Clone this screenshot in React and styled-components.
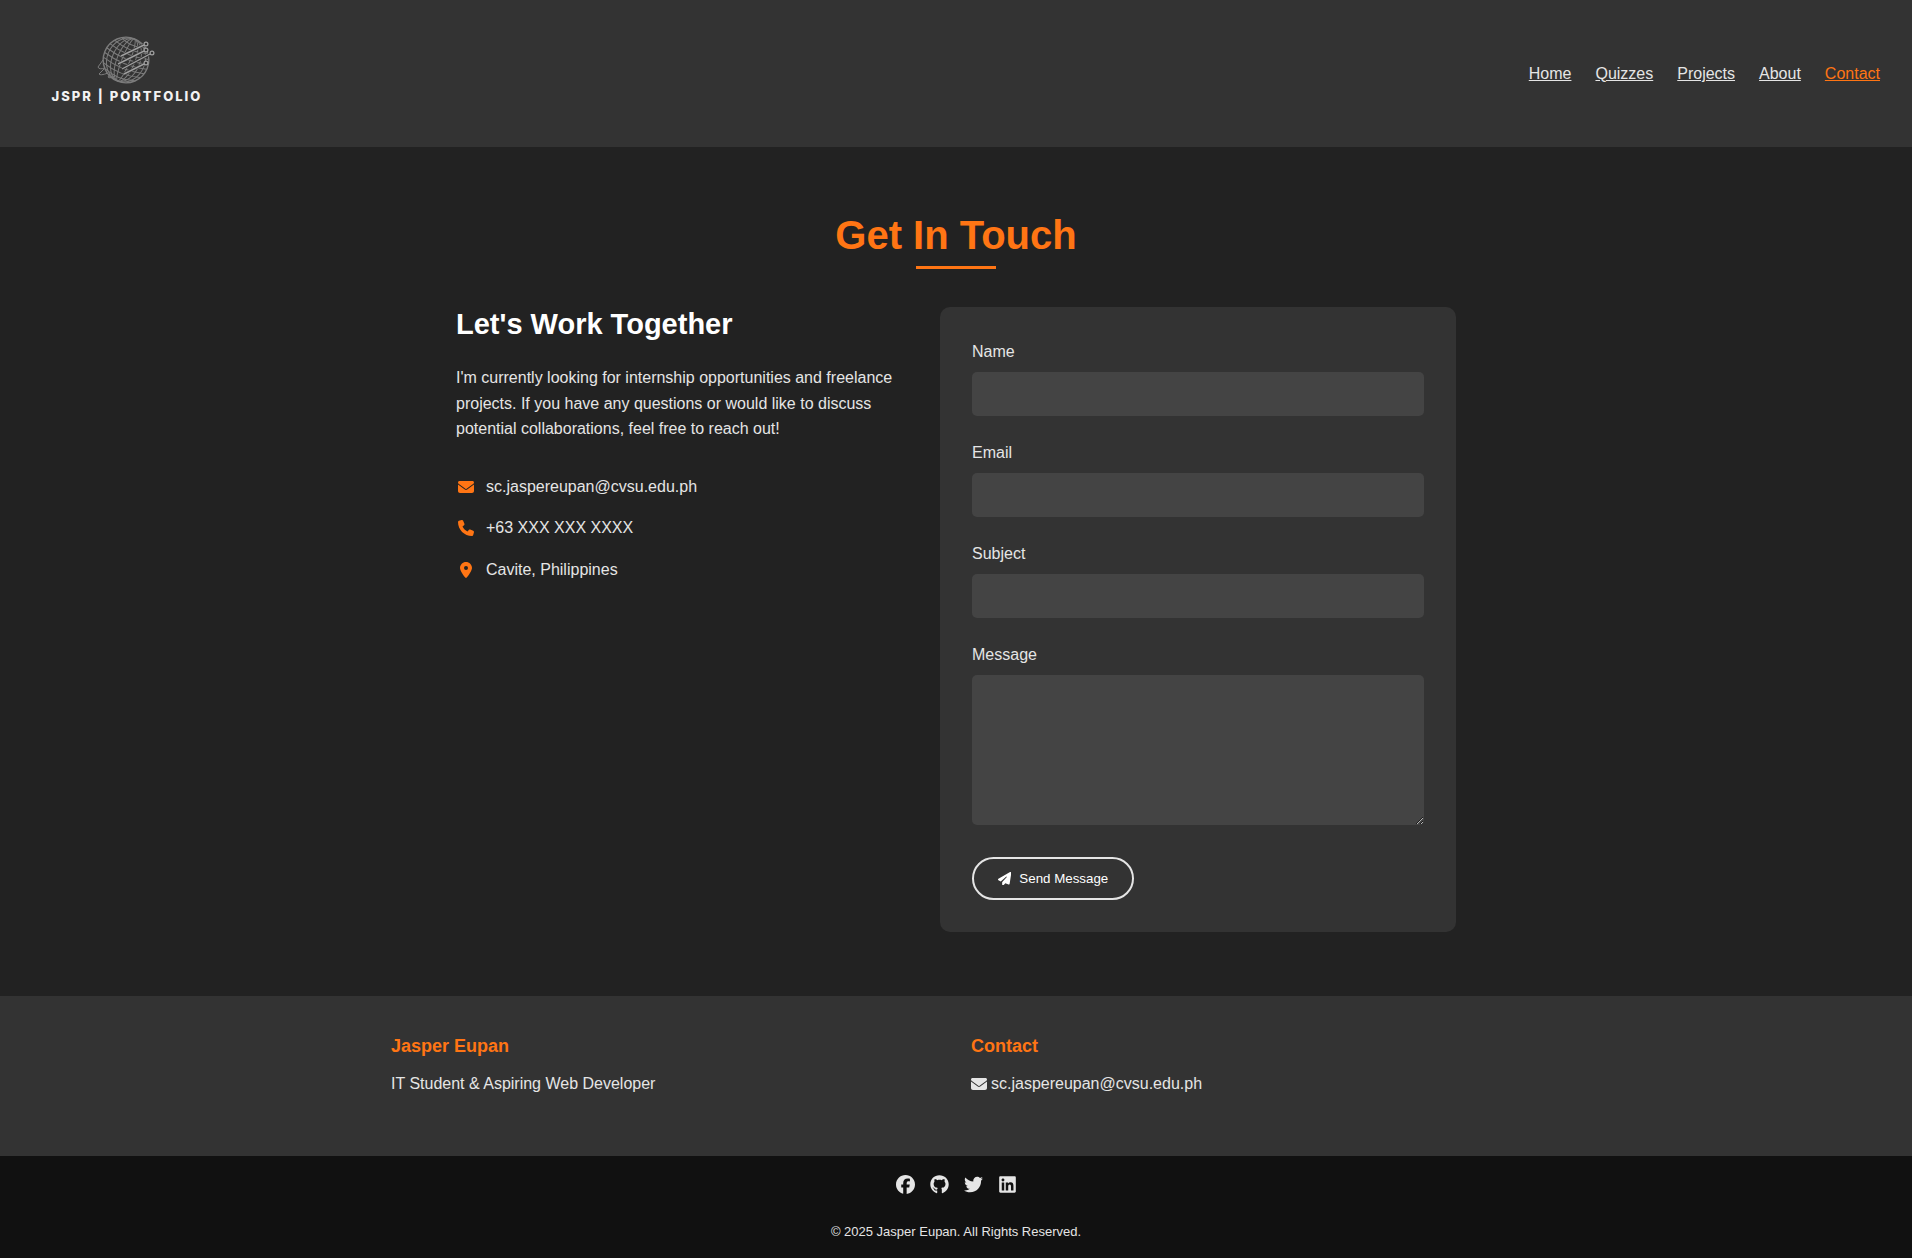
import React from "react";
import styled, { createGlobalStyle } from "styled-components";
import {
  FaEnvelope,
  FaPhone,
  FaLocationDot,
  FaPaperPlane,
  FaFacebook,
  FaGithub,
  FaTwitter,
  FaLinkedin,
} from "react-icons/fa6";

const accent = "#ff7514";
const light = "#e5e5e5";

const GlobalStyle = createGlobalStyle`
  *, *::before, *::after { box-sizing: border-box; }
  body {
    margin: 0;
    background: #222;
    color: ${light};
    font-family: "Liberation Sans", Arial, sans-serif;
    font-size: 16px;
    line-height: 1.6;
  }
  h1, h2, h3, p, ul { margin: 0; padding: 0; }
  ul { list-style: none; }
`;

const Header = styled.header`
  display: flex;
  justify-content: space-between;
  align-items: center;
  padding: 16px 32px;
  background: #333;
`;

const Logo = styled.a`
  display: flex;
  flex-direction: column;
  align-items: center;
  gap: 4px;
  width: 190px;
  padding: 19px 0 27px;
  color: #f2f2f2;
  text-decoration: none;
`;

const LogoText = styled.span`
  font-family: Inter, sans-serif;
  font-size: 13px;
  font-weight: 800;
  line-height: 15px;
  letter-spacing: 2px;
  white-space: nowrap;
`;

const NavList = styled.ul`
  display: flex;
  gap: 24px;
`;

const NavLink = styled.a`
  color: ${(p) => (p.$active ? accent : light)};
  text-decoration: underline;
`;

const ContactSection = styled.main`
  padding: 64px 32px;
`;

const Title = styled.h1`
  margin-bottom: 38px;
  color: ${accent};
  font-size: 40px;
  line-height: 48px;
  text-align: center;

  &::after {
    content: "";
    display: block;
    width: 80px;
    height: 3px;
    margin: 7px auto 0;
    background: ${accent};
  }
`;

const Columns = styled.div`
  display: flex;
  gap: 32px;
  max-width: 1000px;
  margin: 0 auto;
`;

const Info = styled.section`
  flex: 1;
`;

const InfoTitle = styled.h2`
  margin-bottom: 24px;
  color: #fff;
  font-size: 29px;
  line-height: 34px;
`;

const ContactList = styled.ul`
  display: grid;
  gap: 16px;
  margin-top: 32px;
`;

const ContactItem = styled.li`
  display: flex;
  align-items: center;
  gap: 10px;
`;

const IconSlot = styled.span`
  display: flex;
  justify-content: center;
  width: 20px;
  color: ${accent};
`;

const Form = styled.form`
  flex: 1;
  padding: 32px;
  background: #333;
  border-radius: 10px;
`;

const Field = styled.div`
  display: flex;
  flex-direction: column;
  gap: 8px;
  margin-bottom: ${(p) => (p.$last ? 32 : 24)}px;
`;

const Label = styled.label`
  line-height: 25px;
`;

const Input = styled.input`
  width: 100%;
  height: 44px;
  padding: 12px;
  border: 0;
  border-radius: 5px;
  background: #444;
  color: ${light};
  font: inherit;
`;

const TextArea = styled.textarea`
  width: 100%;
  height: 150px;
  padding: 12px;
  border: 0;
  border-radius: 5px;
  background: #444;
  color: ${light};
  font: inherit;
  resize: vertical;
`;

const SendButton = styled.button`
  display: flex;
  align-items: center;
  gap: 8px;
  padding: 12px 24px;
  border: 2px solid ${light};
  border-radius: 30px;
  background: transparent;
  color: #fff;
  font-family: inherit;
  font-weight: 500;
  line-height: 15px;
  cursor: pointer;
`;

const FooterTop = styled.div`
  padding: 39px 32px 59px;
  background: #333;
`;

const FooterColumns = styled.div`
  display: grid;
  grid-template-columns: 1fr 1fr;
  gap: 30px;
  max-width: 1130px;
  margin: 0 auto;
`;

const FooterTitle = styled.h3`
  margin-bottom: 14px;
  color: ${accent};
  font-size: 18px;
  line-height: 22px;
`;

const FooterText = styled.p`
  display: flex;
  align-items: center;
  gap: 4px;
`;

const FooterBottom = styled.div`
  display: flex;
  flex-direction: column;
  align-items: center;
  gap: 27px;
  padding: 19px 32px 15px;
  background: #111;
`;

const Socials = styled.ul`
  display: flex;
  gap: 15px;
`;

const SocialLink = styled.a`
  display: flex;
  color: ${light};
  font-size: 19px;

  svg {
    width: auto;
  }
`;

const Copyright = styled.p`
  font-size: 13px;
  line-height: 22px;
`;

const meridians = [4, 9, 14, 19];
const parallels = [-19, -14, -9, -4, 1, 6, 11, 16];
const rays = [
  [25, 21, 50, 9],
  [22, 29, 50, 15],
  [26, 34, 56, 18],
  [28, 39, 50, 28],
];

function Globe() {
  return (
    <svg width="62" height="50" viewBox="0 0 62 50" fill="none" stroke="#7c7c7c" aria-hidden="true">
      <g transform="rotate(22 30 25)">
        <circle cx="30" cy="25" r="22.8" strokeWidth="1.4" />
        {meridians.map((rx) => (
          <ellipse key={rx} cx="30" cy="25" rx={rx} ry="22.5" />
        ))}
        {parallels.map((y) => {
          const half = Math.sqrt(22.5 * 22.5 - y * y);
          return (
            <path
              key={y}
              d={`M${30 - half} ${25 + y} Q30 ${25 + y + 6} ${30 + half} ${25 + y}`}
            />
          );
        })}
      </g>
      {rays.map(([x1, y1, x2, y2]) => (
        <g key={`${x2}-${y2}`}>
          <line x1={x1} y1={y1} x2={x2 - 2} y2={y2 + 1} stroke="#333" strokeWidth="3" />
          <line x1={x1} y1={y1} x2={x2 - 2} y2={y2 + 1} stroke="#a0a0a0" strokeWidth="1.4" />
          <circle cx={x2} cy={y2} r="1.9" fill="#333" stroke="#a0a0a0" strokeWidth="1.2" />
        </g>
      ))}
      <path d="M7 25 L2 32 Q3 35 9 33 M8 34 L3 39 Q4 41 12 38 M14 39 L12 42 Q13 44 19 41" />
    </svg>
  );
}

const navItems = ["Home", "Quizzes", "Projects", "About", "Contact"];

const contacts = [
  [FaEnvelope, "sc.jaspereupan@cvsu.edu.ph"],
  [FaPhone, "+63 XXX XXX XXXX"],
  [FaLocationDot, "Cavite, Philippines"],
];

const fields = [
  ["name", "Name", "text"],
  ["email", "Email", "email"],
  ["subject", "Subject", "text"],
];

const socials = [
  [FaFacebook, "Facebook"],
  [FaGithub, "GitHub"],
  [FaTwitter, "Twitter"],
  [FaLinkedin, "LinkedIn"],
];

export default function App() {
  return (
    <>
      <GlobalStyle />
      <Header>
        <Logo href="#home">
          <Globe />
          <LogoText>JSPR | PORTFOLIO</LogoText>
        </Logo>
        <nav>
          <NavList>
            {navItems.map((item) => (
              <li key={item}>
                <NavLink href={`#${item.toLowerCase()}`} $active={item === "Contact"}>
                  {item}
                </NavLink>
              </li>
            ))}
          </NavList>
        </nav>
      </Header>

      <ContactSection>
        <Title>Get In Touch</Title>
        <Columns>
          <Info>
            <InfoTitle>Let's Work Together</InfoTitle>
            <p>
              I'm currently looking for internship opportunities and freelance projects. If you have
              any questions or would like to discuss potential collaborations, feel free to reach
              out!
            </p>
            <ContactList>
              {contacts.map(([Icon, text]) => (
                <ContactItem key={text}>
                  <IconSlot>
                    <Icon aria-hidden="true" />
                  </IconSlot>
                  <span>{text}</span>
                </ContactItem>
              ))}
            </ContactList>
          </Info>

          <Form onSubmit={(e) => e.preventDefault()}>
            {fields.map(([id, label, type]) => (
              <Field key={id}>
                <Label htmlFor={id}>{label}</Label>
                <Input id={id} name={id} type={type} />
              </Field>
            ))}
            <Field $last>
              <Label htmlFor="message">Message</Label>
              <TextArea id="message" name="message" />
            </Field>
            <SendButton type="submit">
              <FaPaperPlane aria-hidden="true" />
              Send Message
            </SendButton>
          </Form>
        </Columns>
      </ContactSection>

      <footer>
        <FooterTop>
          <FooterColumns>
            <section>
              <FooterTitle>Jasper Eupan</FooterTitle>
              <FooterText>IT Student &amp; Aspiring Web Developer</FooterText>
            </section>
            <section>
              <FooterTitle>Contact</FooterTitle>
              <FooterText>
                <FaEnvelope aria-hidden="true" />
                <span>sc.jaspereupan@cvsu.edu.ph</span>
              </FooterText>
            </section>
          </FooterColumns>
        </FooterTop>
        <FooterBottom>
          <Socials>
            {socials.map(([Icon, name]) => (
              <li key={name}>
                <SocialLink href={`#${name.toLowerCase()}`} aria-label={name}>
                  <Icon aria-hidden="true" />
                </SocialLink>
              </li>
            ))}
          </Socials>
          <Copyright>© 2025 Jasper Eupan. All Rights Reserved.</Copyright>
        </FooterBottom>
      </footer>
    </>
  );
}
